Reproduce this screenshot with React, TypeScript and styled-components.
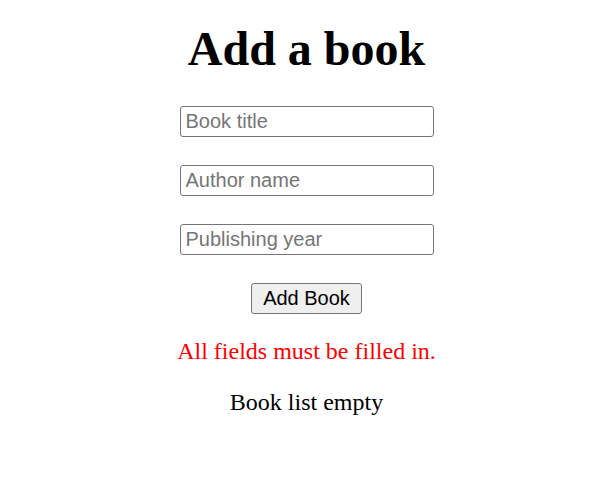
import React from "react";
import styled, { createGlobalStyle } from "styled-components";

const Global = createGlobalStyle`
  html, body { margin: 0; padding: 0; background: #ffffff; }
  body { font-family: "Liberation Serif", "Times New Roman", serif; color: #000; }
`;

const Page = styled.div`
  display: flex;
  flex-direction: column;
  align-items: center;
  padding: 21px 0 0 6px;
`;

const Title = styled.h1`
  margin: 0 0 30px;
  font-size: 48px;
  font-weight: bold;
  line-height: 55px;
`;

const Form = styled.form`
  display: flex;
  flex-direction: column;
  align-items: center;
  gap: 28px;
`;

const Field = styled.input`
  box-sizing: border-box;
  width: 254px;
  height: 31px;
  padding: 2px 5px;
  border: 1px solid #767676;
  border-radius: 3px;
  font-family: "Liberation Sans", Arial, sans-serif;
  font-size: 20px;
  color: #000;
  background: #fff;
  &::placeholder { color: #757575; }
`;

const Button = styled.button`
  box-sizing: border-box;
  height: 31px;
  padding: 0 11px;
  border: 1px solid #767676;
  border-radius: 3px;
  background: #efefef;
  font-family: "Liberation Sans", Arial, sans-serif;
  font-size: 20px;
  color: #000;
`;

const Message = styled.p<{ $error?: boolean }>`
  margin: 24px 0 0;
  font-size: 24px;
  line-height: 27px;
  color: ${(p) => (p.$error ? "#ff0000" : "#000")};
`;

export default function App() {
  return (
    <>
      <Global />
      <Page>
        <Title>Add a book</Title>
        <Form onSubmit={(e) => e.preventDefault()}>
          <Field placeholder="Book title" />
          <Field placeholder="Author name" />
          <Field placeholder="Publishing year" />
          <Button type="submit">Add Book</Button>
        </Form>
        <Message $error>All fields must be filled in.</Message>
        <Message>Book list empty</Message>
      </Page>
    </>
  );
}
